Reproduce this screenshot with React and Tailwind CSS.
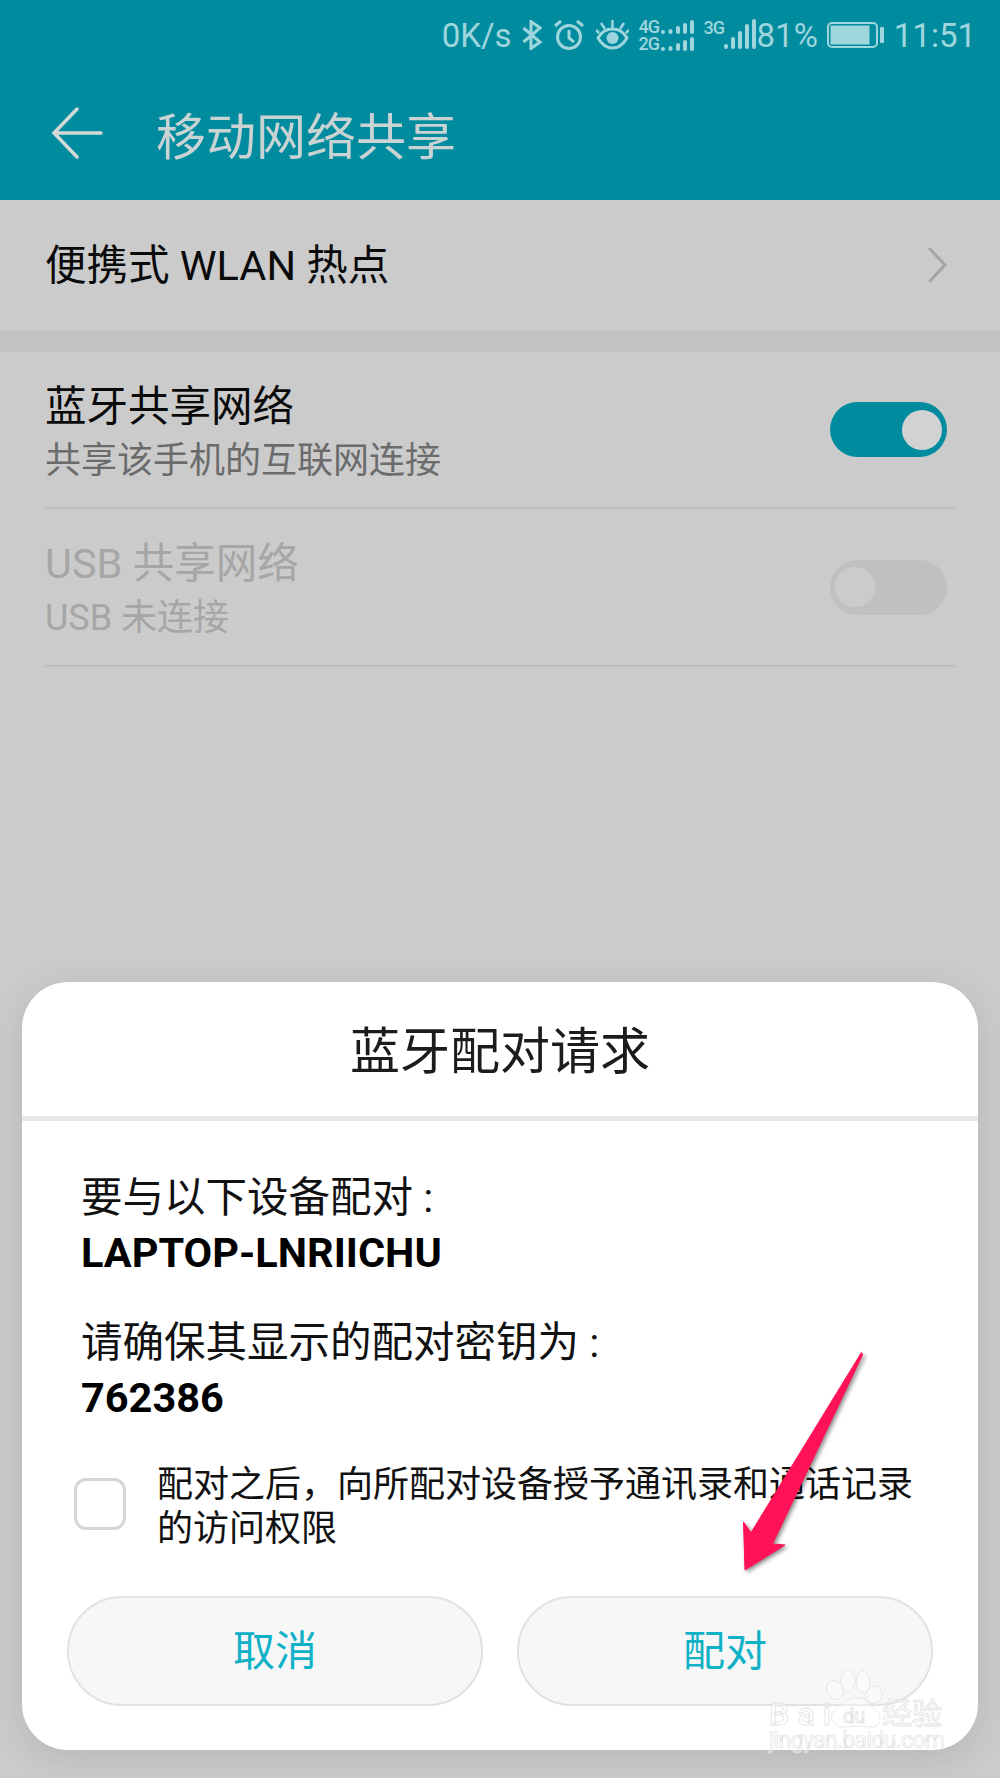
const FONT = { fontFamily: 'Roboto, "Noto Sans CJK SC", sans-serif' }

function Bars({ bars, width, height, barWidth, color = "#9fd5dc" }) {
  // bars: [x, barHeight], drawn up from the bottom edge
  return (
    <svg width={width} height={height} viewBox={`0 0 ${width} ${height}`} className="block shrink-0">
      {bars.map(([x, h]) => (
        <rect key={x} x={x} y={height - h} width={barWidth} height={h} rx={barWidth / 2} fill={color} />
      ))}
    </svg>
  )
}

function StatusBar() {
  const small = [[0, 4], [7.500, 5], [15, 8], [22, 11], [29, 14]]
  return (
    <div className="flex h-[70px] items-center justify-end pr-[24px] text-[33px] leading-none text-[#9fd5dc]">
      <span>0K/s</span>
      <svg width="20" height="30" viewBox="0 0 20 30" fill="none" stroke="#9fd5dc" strokeWidth="3" className="ml-[10px] shrink-0">
        <path d="M1.5 8 18 22 9 28.500V1.500L18 8 1.500 22" />
      </svg>
      <svg width="32" height="32" viewBox="0 0 32 32" fill="none" stroke="#9fd5dc" strokeWidth="3" className="ml-[11px] shrink-0">
        <circle cx="16" cy="18" r="11.500" />
        <path d="M16 11v8l5 4M2 7l6-5M30 7l-6-5" />
      </svg>
      <svg width="33" height="30" viewBox="0 0 33 30" fill="none" stroke="#9fd5dc" strokeWidth="3" className="ml-[11px] shrink-0">
        <path d="M2 18C6 11 11 9 16.500 9S27 11 31 18C27 25 22 28 16.500 28S6 25 2 18Z" />
        <circle cx="16.500" cy="18" r="6" fill="#9fd5dc" stroke="none" />
        <path d="M16.500 8V0M9 9 5 3M24 9l4-6M3 13 0 10M30 13l3-3" strokeWidth="2.500" />
      </svg>
      <div className="ml-[10px] flex w-[55px] shrink-0 flex-col gap-[3px]">
        <div className="flex items-end justify-between">
          <span className="text-[18px] leading-[14px] font-medium tracking-[-1px]">4G</span>
          <Bars bars={small} width={33} height={14} barWidth={4} />
        </div>
        <div className="flex items-end justify-between">
          <span className="text-[18px] leading-[14px] font-medium tracking-[-1px]">2G</span>
          <Bars bars={small} width={33} height={14} barWidth={4} />
        </div>
      </div>
      <div className="ml-[10px] flex h-[32px] w-[49px] shrink-0 items-start justify-between">
        <span className="mt-[2px] text-[18px] leading-[14px] font-medium tracking-[-1px]">3G</span>
        <Bars bars={[[0, 5], [7, 12], [14, 18], [21, 25], [28, 30]]} width={32} height={30} barWidth={4} />
      </div>
      <span className="ml-[4px]">81%</span>
      <svg width="57" height="26" viewBox="0 0 57 26" fill="none" className="ml-[9px] shrink-0">
        <rect x="1" y="1" width="49" height="24" rx="4" stroke="#9fd5dc" strokeWidth="2" />
        <rect x="3.500" y="3.500" width="39" height="19" fill="#9fd5dc" />
        <rect x="53" y="5" width="4" height="16" rx="1" fill="#9fd5dc" />
      </svg>
      <span className="ml-[10px]">11:51</span>
    </div>
  )
}

function Toggle({ on }) {
  return (
    <div
      className={`flex h-[55px] w-[117px] shrink-0 items-center rounded-full px-[5px] ${
        on ? "justify-end bg-[#008c9e]" : "justify-start bg-[#c0c0c0]"
      }`}
    >
      <span className={`h-[40px] w-[40px] rounded-full ${on ? "bg-[#d2d2d2]" : "bg-[#cbcbcb]"}`} />
    </div>
  )
}

function ToggleRow({ title, sub, on, titleColor, subColor, heightClass }) {
  return (
    <div className={`mx-[45px] flex items-center justify-between border-b-2 border-[#bdbdbd] pr-[8px] ${heightClass}`}>
      <div className="pt-[8px]">
        <div className={`text-[41.5px] leading-[54px] ${titleColor}`}>{title}</div>
        <div className={`text-[36px] leading-[54px] ${subColor}`}>{sub}</div>
      </div>
      <Toggle on={on} />
    </div>
  )
}

function Watermark() {
  return (
    <svg width="200" height="95" viewBox="0 0 200 95" className="absolute top-[1660px] left-[760px]" style={FONT}>
      <g fill="rgba(255,255,255,0.35)" stroke="#e2e2e2" strokeWidth="0.8">
        <ellipse cx="75" cy="30" rx="8" ry="10" transform="rotate(-30 75 30)" />
        <ellipse cx="88" cy="21" rx="7" ry="11" />
        <ellipse cx="103" cy="22" rx="7" ry="11" />
        <ellipse cx="114" cy="35" rx="8" ry="9" transform="rotate(25 114 35)" />
        <path d="M97 38C85 38 80 46 75 50 68 56 72 68 84 67 92 66 102 66 110 67 120 68 123 57 117 51 110 46 108 38 97 38Z" />
        <text x="9" y="65" fontSize="32" fontWeight="500" textLength="62">Bai</text>
        <text x="83" y="63" fontSize="20">du</text>
        <text x="122" y="64" fontSize="30" fontFamily='"Noto Sans CJK SC", sans-serif'>经验</text>
        <text x="9" y="88" fontSize="23" strokeWidth="0.7" textLength="176">jingyan.baidu.com</text>
      </g>
    </svg>
  )
}

export default function App() {
  return (
    <div className="relative h-[1778px] w-[1000px] overflow-hidden bg-[#cbcbcb]" style={FONT}>
      <div className="h-[200px] bg-[#008c9e]">
        <StatusBar />
        <div className="flex h-[130px] items-start">
          <svg width="52" height="52" viewBox="0 0 52 52" fill="none" stroke="#d3d9d9" strokeWidth="3.500" strokeLinecap="round" className="mt-[37px] ml-[51px] shrink-0">
            <path d="M26 2 3 26l23 24M3 26h47" />
          </svg>
          <h1 className="mt-[33px] ml-[53px] text-[50px] leading-[70px] font-normal text-[#c9d3d4]">移动网络共享</h1>
        </div>
      </div>

      <div className="flex h-[130px] items-center justify-between pr-[52px] pl-[45px]">
        <span className="mt-[2px] text-[41.5px] text-[#0a0a0a]">便携式 WLAN 热点</span>
        <svg width="20" height="36" viewBox="0 0 20 36" fill="none" stroke="#a5a5a5" strokeWidth="3" strokeLinecap="round">
          <path d="M2 2l15 16L2 34" />
        </svg>
      </div>
      <div className="h-[22px] bg-[#c2c2c2]" />

      <ToggleRow heightClass="h-[157px]" title="蓝牙共享网络" sub="共享该手机的互联网连接" on titleColor="text-[#0a0a0a]" subColor="text-[#6b6b6b]" />
      <ToggleRow heightClass="h-[158px]" title="USB 共享网络" sub="USB 未连接" on={false} titleColor="text-[#a6a6a6]" subColor="text-[#a6a6a6]" />

      {/* dialog sits over the dimmed page */}
      <div className="absolute top-[982px] left-[22px] h-[768px] w-[956px] rounded-[46px] bg-white shadow-[0_8px_36px_rgba(0,0,0,0.1)]">
        <div className="flex h-[134px] items-center justify-center pt-[6px] text-[50px] text-[#1c1c1c]">蓝牙配对请求</div>
        <div className="h-[5px] bg-[#e8e8e8]" />
        <div className="px-[59px] pt-[49px] text-[41.5px] leading-[56px] text-[#111111]">
          <div>要与以下设备配对 :</div>
          <div className="-mt-[1px] font-bold text-black">LAPTOP-LNRIICHU</div>
          <div className="mt-[34px]">请确保其显示的配对密钥为 :</div>
          <div className="-mt-[1px] font-bold text-black">762386</div>
          <div className="mt-[37px] -ml-[7px] flex items-start gap-[31px]">
            <div className="mt-[15px] h-[52px] w-[52px] shrink-0 rounded-[12px] border-[3px] border-[#d6d6d6]" />
            <div className="w-[770px] text-[36px] leading-[44px]">配对之后，向所配对设备授予通讯录和通话记录的访问权限</div>
          </div>
        </div>
        <div className="mt-[45px] flex gap-[34px] pl-[45px]">
          <button type="button" className="h-[110px] w-[416px] rounded-full border-2 border-[#e2e2e2] bg-[#f7f7f7] text-[42px] text-[#0fb1c6]">取消</button>
          <button type="button" className="h-[110px] w-[416px] rounded-full border-2 border-[#e2e2e2] bg-[#f7f7f7] text-[42px] text-[#0fb1c6]">配对</button>
        </div>
      </div>

      <svg width="150" height="240" viewBox="0 0 150 240" className="absolute top-[1340px] left-[725px] drop-shadow-[2px_2px_2px_rgba(0,0,0,0.45)]">
        <polygon points="136.500,12.500 137.500,15 47.500,204 60,205 20,230 18.500,182 26,192.700" fill="#ff1257" stroke="#ff1257" strokeWidth="1" strokeLinejoin="round" />
      </svg>
      <Watermark />
    </div>
  )
}
